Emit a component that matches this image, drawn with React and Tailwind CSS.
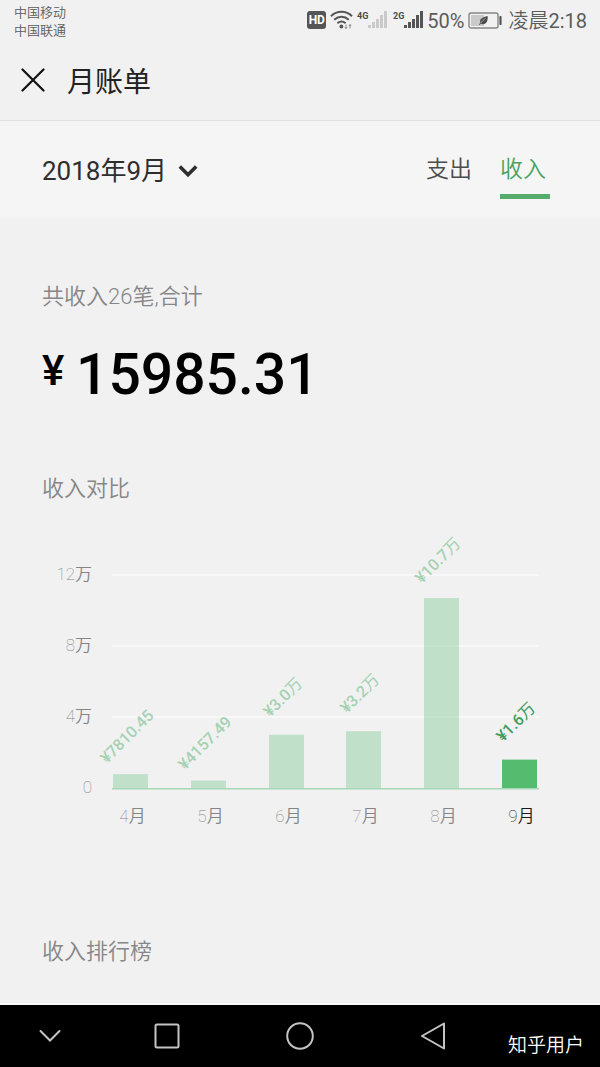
import { useState } from 'react'

const MONTHS = [
  { month: 4, amount: 7810.45, label: '7810.45' },
  { month: 5, amount: 4157.49, label: '4157.49' },
  { month: 6, amount: 30000, label: '3.0', unit: '万' },
  { month: 7, amount: 32000, label: '3.2', unit: '万' },
  { month: 8, amount: 107000, label: '10.7', unit: '万' },
  { month: 9, amount: 15985.31, label: '1.6', unit: '万' },
]

const TABS = [
  { id: 'expense', label: '支出' },
  { id: 'income', label: '收入' },
]

const TICKS = [
  { value: 120000, label: '12', unit: '万' },
  { value: 80000, label: '8', unit: '万' },
  { value: 40000, label: '4', unit: '万' },
  { value: 0, label: '0' },
]

// chart geometry, in viewBox units
const BASE_Y = 258
const PLOT_H = 213
const FIRST_X = 71
const STEP = 78
const BAR_W = 35

const yOf = v => BASE_Y - (v / 120000) * PLOT_H
const xOf = i => FIRST_X + i * STEP - Math.round(i / 5)

function SignalIcon({ network, className }) {
  return (
    <svg width="32" height="20" viewBox="0 0 32 20" className="shrink-0">
      <text x="0" y="9" fontSize="9" className="fill-[#4a4a4a] font-bold">{network}</text>
      <g className={className}>
        <rect x="11" y="15" width="3" height="3" />
        <rect x="15" y="12" width="3" height="6" />
        <rect x="19" y="9" width="3" height="9" />
        <rect x="23" y="5" width="3" height="13" />
        <rect x="27" y="1" width="3" height="17" />
      </g>
    </svg>
  )
}

function WifiIcon() {
  return (
    <svg width="23" height="20" viewBox="0 0 23 20" className="shrink-0" fill="none" stroke="#555" strokeWidth="2">
      <path d="M1 6.2C7 .4 16 .4 22 6.2" />
      <path d="M4.2 9.8c4.4-4 10.2-4 14.600 0" />
      <path d="M7.4 13.2c2.600-2.200 5.600-2.200 8.200 0" />
      <circle cx="11.4" cy="16.500" r="1.900" fill="#555" stroke="none" />
      <path d="M16 14.500v4M14.800 17.200l1.200 1.500 1.200-1.500M20 18.500v-4M18.800 16l1.200-1.500 1.200 1.500" strokeWidth=".8" stroke="#777" />
    </svg>
  )
}

function BatteryIcon() {
  return (
    <svg width="34" height="18" viewBox="0 0 34 18" className="shrink-0">
      <rect x="1" y="2" width="29" height="15" rx="2" fill="#f1f1f1" stroke="#858585" strokeWidth="1.4" />
      <rect x="3" y="4" width="13" height="11" fill="#c9c9c9" />
      <rect x="31.4" y="5" width="2.2" height="9" rx=".8" fill="#555" />
      <path d="M19.600 5c.5 4.800-1 8.200-4.600 8.200-.9 0-1.600-.3-2.100-.7l-1.200 1.500-.7-.5 1.300-1.700C11.200 8.200 14.500 6 19.600 5z" fill="#4a4a4a" />
      <path d="M12.600 12.200c1.400-2 2.800-3.300 4.900-4.800" stroke="#c9c9c9" strokeWidth=".7" fill="none" />
    </svg>
  )
}

function StatusBar() {
  return (
    <div className="flex h-10 items-center justify-between pl-[14px] pr-[13px] text-[#5c5c5c]">
      <div className="pt-1 text-[13px] font-[350] leading-[18px]">
        <p>中国移动</p>
        <p>中国联通</p>
      </div>
      <div className="flex items-center text-[20px] leading-6">
        <span className="mr-1 flex h-[18px] w-[19px] items-center justify-center rounded-[3px] bg-[#555] text-[12px] font-bold text-white">HD</span>
        <WifiIcon />
        <span className="ml-1 flex gap-1">
          <SignalIcon network="4G" className="fill-[#cacaca]" />
          <SignalIcon network="2G" className="fill-[#555]" />
        </span>
        <span className="ml-[2px] mr-1 pt-[2px]">50%</span>
        <BatteryIcon />
        <span className="ml-[6px] pt-[2px] font-[350]">凌晨<span className="font-normal">2:18</span></span>
      </div>
    </div>
  )
}

function IncomeChart({ current }) {
  return (
    <svg viewBox="0 0 516 300" className="block w-full" role="img" aria-label="收入对比">
      {TICKS.map(t => (
        <g key={t.value}>
          {t.value > 0 && <rect x="70" y={yOf(t.value) - 1} width="427" height="2" fill="#f8f8f8" />}
          <text x="50" y={yOf(t.value) + 5} fontSize="17" textAnchor="end" className="fill-[#858585]">
            <tspan className="font-thin">{t.label}</tspan>
            {t.unit && <tspan className="font-[350]">{t.unit}</tspan>}
          </text>
        </g>
      ))}

      {MONTHS.map((m, i) => {
        const active = m.month === current
        const x = xOf(i)
        const y = yOf(m.amount)
        const cx = x + BAR_W / 2
        return (
          <g key={m.month}>
            <rect x={x} y={y} width={BAR_W} height={BASE_Y - y} className={active ? 'fill-[#54bb6f]' : 'fill-[#54bb6f]/30'} />
            <text
              transform={`translate(${cx - 4} ${y - 38}) rotate(-45)`}
              y="6"
              fontSize="16"
              textAnchor="middle"
              className={active ? 'fill-[#3f9c5c]' : 'fill-[#a5d2b3]'}
            >
              <tspan className="font-medium">¥{m.label}</tspan>
              {m.unit && <tspan className="font-normal">{m.unit}</tspan>}
            </text>
            <text x={cx + 2} y="292" fontSize="17" textAnchor="middle" className={active ? 'fill-[#1a1a1a]' : 'fill-[#858585]'}>
              <tspan className="font-thin">{m.month}</tspan>
              <tspan className="font-[350]">月</tspan>
            </text>
          </g>
        )
      })}

      <rect x="70" y={BASE_Y} width="427" height="1.500" fill="#a6d8b5" />
    </svg>
  )
}

function NavBar() {
  const btn = 'flex h-full items-center justify-center'
  return (
    <nav className="relative grid h-[64px] grid-cols-[3fr_4fr_4fr_4fr_3fr] items-center border-t-2 border-[#fafafa] bg-black">
      <button aria-label="收起" className={btn}>
        <svg width="22" height="14" viewBox="0 0 22 14" fill="none" stroke="#c4c4c4" strokeWidth="2" strokeLinecap="round">
          <path d="M1.500 2 11 11.500 20.500 2" />
        </svg>
      </button>
      <button aria-label="最近任务" className={btn}>
        <svg width="28" height="28" viewBox="0 0 28 28" fill="none" stroke="#c4c4c4" strokeWidth="2">
          <rect x="2.500" y="2.500" width="23" height="23" rx="1.500" />
        </svg>
      </button>
      <button aria-label="主屏幕" className={btn}>
        <svg width="30" height="30" viewBox="0 0 30 30" fill="none" stroke="#c4c4c4" strokeWidth="2">
          <circle cx="15" cy="15" r="12.800" />
        </svg>
      </button>
      <button aria-label="返回" className={btn}>
        <svg width="28" height="30" viewBox="0 0 28 30" fill="none" stroke="#c4c4c4" strokeWidth="2" strokeLinejoin="round">
          <path d="M25 2.500v25L3 15z" />
        </svg>
      </button>
      <span className="absolute bottom-[9px] right-4 text-[19px] font-[350] leading-6 text-white">知乎用户</span>
    </nav>
  )
}

export default function App() {
  const [tab, setTab] = useState('income')
  const [month, setMonth] = useState(9)

  return (
    <div className="flex min-h-screen flex-col bg-[#f1f1f1] font-['Roboto','Noto_Sans_CJK_SC',sans-serif]">
      <StatusBar />

      <header className="flex h-[81px] items-center gap-[22px] border-b border-[#e2e2e2] pl-[21px]">
        <button aria-label="关闭">
          <svg width="24" height="24" viewBox="0 0 24 24" fill="none" stroke="#111" strokeWidth="2.200" strokeLinecap="round">
            <path d="M1.500 1.500l21 21M22.500 1.500l-21 21" />
          </svg>
        </button>
        <h1 className="pt-[6px] text-[28px] leading-10 text-[#222]">月账单</h1>
      </header>

      {/* Month picker and tabs */}
      <div className="flex h-24 items-center justify-between bg-[#f5f5f5] pl-[42px] pr-[50px]">
        <label className="flex items-center gap-[10px] pt-1 text-[#2e2e2e]">
          <select
            aria-label="月份"
            value={month}
            onChange={e => setMonth(Number(e.target.value))}
            className="appearance-none bg-transparent text-[26px] leading-10"
          >
            {MONTHS.map(m => (
              <option key={m.month} value={m.month}>2018年{m.month}月</option>
            ))}
          </select>
          <svg width="20" height="14" viewBox="0 0 20 14" fill="none" stroke="currentColor" strokeWidth="3.600">
            <path d="M1.800 2.500 10 10.700l8.200-8.200" />
          </svg>
        </label>
        <div role="tablist" className="flex gap-6 pt-3">
          {TABS.map(t => (
            <button
              key={t.id}
              role="tab"
              aria-selected={tab === t.id}
              onClick={() => setTab(t.id)}
              className={`w-[50px] border-b-[5px] pb-[6px] text-left text-[23px] font-[350] leading-9 ${
                tab === t.id ? 'border-[#57ab6c] text-[#48a263]' : 'border-transparent text-[#4c4c4c]'
              }`}
            >
              {t.label}
            </button>
          ))}
        </div>
      </div>

      <main className="flex-1 px-[42px] pb-8 pt-[64px] text-[22px] font-[350] leading-8 text-[#868686]">
        <p>共收入26笔,合计</p>
        <p className="mt-[26px] flex items-start font-medium text-black">
          <span className="w-[34px] text-[42px] leading-[64px]">¥</span>
          <span className="text-[57px] leading-[72px]">15985.31</span>
        </p>

        <h2 className="mt-[62px]">收入对比</h2>
        <div className="mt-[25px]">
          <IncomeChart current={month} />
        </div>

        <h2 className="mt-[106px]">收入排行榜</h2>
      </main>

      <NavBar />
    </div>
  )
}
